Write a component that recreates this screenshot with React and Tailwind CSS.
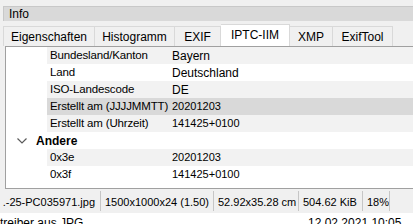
const tabs = [
    { label: "Eigenschaften", w: "w-[92px]" },
    { label: "Histogramm", w: "w-[80px]" },
    { label: "EXIF", w: "w-[46px]" },
    { label: "IPTC-IIM", w: "w-[69px]", active: true },
    { label: "XMP", w: "w-[43px]" },
    { label: "ExifTool", w: "w-[60px]" },
]

const rows = [
    { label: "Bundesland/Kanton", value: "Bayern", bg: "bg-[#f2f2f2]" },
    { label: "Land", value: "Deutschland", bg: "bg-white" },
    { label: "ISO-Landescode", value: "DE", bg: "bg-[#f2f2f2]" },
    { label: "Erstellt am (JJJJMMTT)", value: "20201203", bg: "bg-[#d9d9d9]", num: true },
    { label: "Erstellt am (Uhrzeit)", value: "141425+0100", bg: "bg-[#f2f2f2]", num: true },
    { group: "Andere" },
    { label: "0x3e", value: "20201203", bg: "bg-[#f2f2f2]", num: true },
    { label: "0x3f", value: "141425+0100", bg: "bg-white", num: true },
]

const status = [
    { text: ".-25-PC035971.jpg", w: "w-[101px]", clip: true },
    { text: "1500x1000x24 (1.50)", w: "w-[113px]" },
    { text: "52.92x35.28 cm", w: "w-[85px]" },
    { text: "504.62 KiB", w: "w-[64px]" },
    { text: "18%", w: "w-[27px]" },
]

function Chevron() {
    return (
        <svg width="10" height="6" viewBox="0 0 10 6" className="ml-[11px] mr-[9px]">
            <polyline points="0.5,0.5 5,5 9.5,0.5" fill="none" stroke="#5a5a5a" strokeWidth="1.2" />
        </svg>
    )
}

export default function App() {
    return (
        <div className="w-[413px] h-[224px] overflow-hidden bg-[#f0f0f0] text-[12px] text-black font-['Liberation_Sans',Arial,sans-serif]">
            {/* title */}
            <div className="mt-[6px] ml-[3px] h-[15px] bg-[#d9d9d9] border-t border-l border-[#c8c8c8] flex items-center pl-[5px] leading-none">
                Info
            </div>

            {/* tabs */}
            <div className="h-[25px] flex items-end pl-[3px]">
                {tabs.map((t, i) => (
                    <div
                        key={t.label}
                        className={`${t.w} flex items-center justify-center border-t border-r border-[#d9d9d9] ${i === 0 ? "border-l" : ""} ${t.active ? "h-[22px] bg-white pb-[2px]" : "h-[20px] bg-[#f0f0f0]"}`}
                    >
                        {t.label}
                    </div>
                ))}
            </div>

            {/* pane */}
            <div className="ml-[5px] h-[143px] bg-white border-t border-l border-b border-[#a0a0a0]">
                {rows.map((r, i) =>
                    r.group ? (
                        <div key={i} className="h-[17px] flex items-center">
                            <Chevron />
                            <span className="font-bold">{r.group}</span>
                        </div>
                    ) : (
                        <div key={i} className="h-[17px] flex">
                            <div className="w-[41px] shrink-0 bg-white" />
                            <div className={`flex-1 flex items-center ${r.bg}`}>
                                <span className="w-[122px] shrink-0 pl-[3px] whitespace-nowrap text-[11.5px] tracking-[-0.15px]">{r.label}</span>
                                <span className={`pl-[3px] whitespace-nowrap ${r.num ? "text-[11px]" : ""}`}>{r.value}</span>
                            </div>
                        </div>
                    )
                )}
            </div>

            {/* status bar */}
            <div className="h-[24px] flex items-center text-[11px]">
                {status.map((s) => (
                    <div
                        key={s.text}
                        className={`${s.w} shrink-0 h-[20px] flex items-center pt-[2px] border-r border-[#c6c6c6] whitespace-nowrap overflow-hidden ${s.clip ? "justify-end pr-[5px]" : "pl-[4px]"}`}
                    >
                        {s.text}
                    </div>
                ))}
            </div>

            {/* cut-off row below */}
            <div className="h-[20px] bg-white flex pt-[3px] leading-[14px]">
                <span className="w-[308px] shrink-0">treiber aus JPG</span>
                <span>12.02.2021 10:05</span>
            </div>
        </div>
    )
}
